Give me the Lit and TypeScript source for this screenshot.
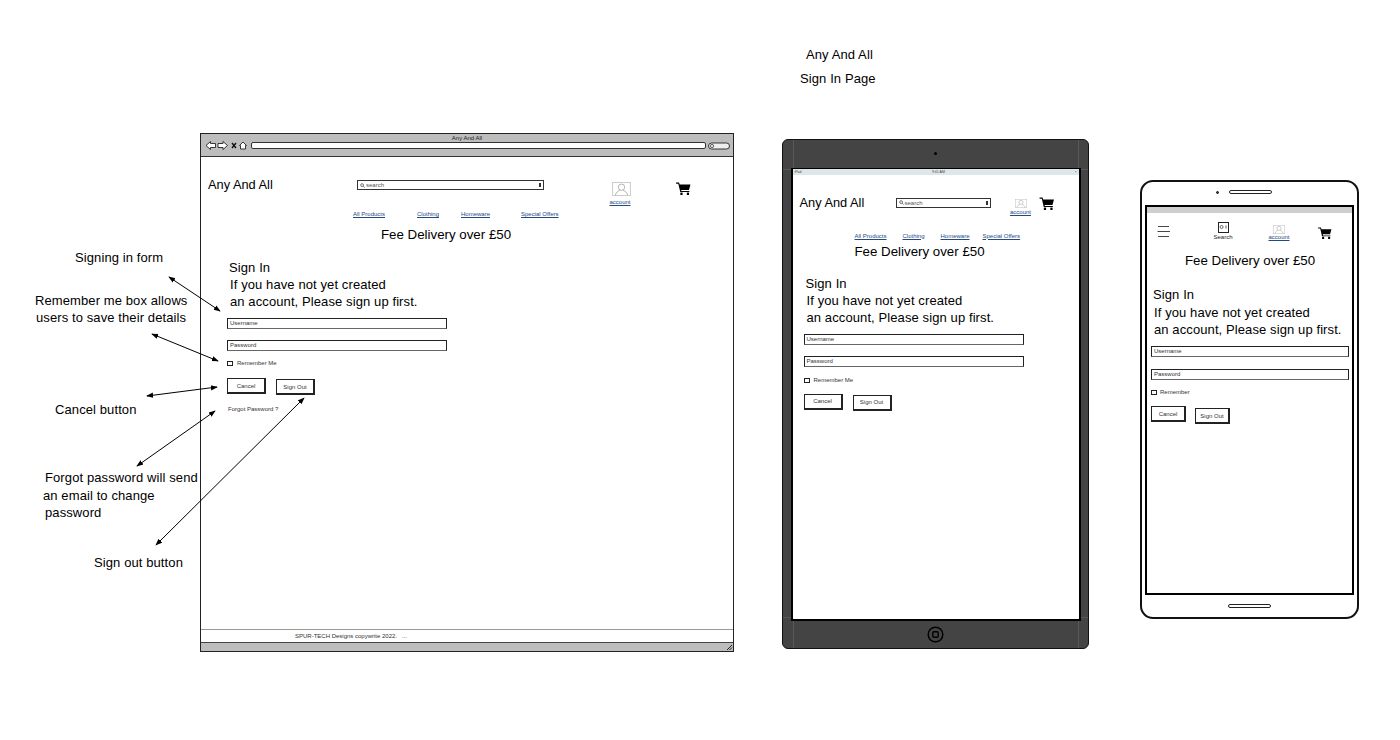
import { LitElement, html, css, svg } from 'lit';
import { customElement } from 'lit/decorators.js';

const notes = [
    { x: 75, y: 250, text: 'Signing in form' },
    { x: 35, y: 293, text: 'Remember me box allows' },
    { x: 36, y: 310, text: 'users to save their details' },
    { x: 55, y: 402, text: 'Cancel button' },
    { x: 45, y: 470, text: 'Forgot password will send' },
    { x: 43, y: 488, text: 'an email to change' },
    { x: 45, y: 505, text: 'password' },
    { x: 94, y: 555, text: 'Sign out button' },
    { x: 806, y: 47, text: 'Any And All' },
    { x: 800, y: 71, text: 'Sign In Page' },
];

const arrows = [
    [169, 277, 220, 311],
    [152, 334, 218, 361],
    [147, 396, 217, 387],
    [137, 466, 215, 411],
    [156, 545, 304, 398],
];

const cartIcon = html`<svg class="cart" viewBox="0 0 16 14">
    <path d="M0 0.6h3.2l0.7 2h11.6l-1.6 6H5.4l0.3 1.2h8.6v1.1H4.5L2.4 1.8H0z" fill="#000"></path>
    <rect x="4.6" y="11.4" width="2.4" height="2.6" fill="#000"></rect>
    <rect x="11.6" y="11.4" width="2.4" height="2.6" fill="#000"></rect>
</svg>`;

const accountIcon = html`<svg class="avatar" viewBox="0 0 20 15">
    <rect x="0.5" y="0.5" width="19" height="14" fill="#fff" stroke="#c8c8c8"></rect>
    <circle cx="10" cy="5.6" r="3.4" fill="none" stroke="#999" stroke-width="0.8"></circle>
    <path d="M3.5 14c0.6-3 3-4.6 4.6-5M16.5 14c-0.6-3-3-4.6-4.6-5" fill="none" stroke="#999" stroke-width="0.8"></path>
</svg>`;

const searchBox = html`<div class="search">
    <svg class="glass" viewBox="0 0 6 6">
        <circle cx="2.5" cy="2.5" r="1.7" fill="none" stroke="#333" stroke-width="0.8"></circle>
        <path d="M3.8 3.8L5.6 5.6" stroke="#333" stroke-width="0.8"></path>
    </svg>
    <span>search</span>
    <b class="spin"></b>
</div>`;

const nav = html`<nav class="links">
    <a>All Products</a><a>Clothing</a><a>Homeware</a><a>Special Offers</a>
</nav>`;

function signInForm(remember: string) {
    return html`<div class="intro">
            <div class="h">Sign In</div>
            <div class="l">If you have not yet created</div>
            <div class="l">an account, Please sign up first.</div>
        </div>
        <div class="field user">Username</div>
        <div class="field pass">Password</div>
        <label class="check"><i></i>${remember}</label>
        <div class="btns">
            <button class="cancel">Cancel</button>
            <button class="out">Sign Out</button>
        </div>`;
}

@customElement('app-root')
export class AppRoot extends LitElement {
    static styles = css`
:host {
    display: block;
    width: 1400px;
    height: 740px;
    background: #fff;
    font-family: "Liberation Sans", Arial, sans-serif;
    color: #000;
}

.canvas {
    position: relative;
    width: 1400px;
    height: 740px;
    overflow: hidden;
}

.note {
    position: absolute;
    font-size: 13px;
    line-height: 15px;
    white-space: nowrap;
    letter-spacing: 0.1px;
}

.arrows {
    position: absolute;
    left: 0;
    top: 0;
    z-index: 3;
    pointer-events: none;
}

/* devices sit on the free canvas */
.browser, .tablet, .phone {
    position: absolute;
    box-sizing: border-box;
}

.browser {
    left: 200px;
    top: 133px;
    width: 534px;
    height: 519px;
    border: 1px solid #222;
    display: flex;
    flex-direction: column;
}

.toolbar {
    height: 23px;
    flex: none;
    background: #bdbdbd;
    border-bottom: 1px solid #333;
    box-sizing: border-box;
}

.title {
    font-size: 6px;
    line-height: 7px;
    text-align: center;
    color: #222;
    height: 7px;
    padding-top: 1px;
}

.tools {
    display: flex;
    align-items: center;
    padding: 0 3px 0 4px;
    margin-top: -2px;
    gap: 2px;
}

.tools svg {
    width: 44px;
    height: 11px;
    flex: none;
}

.tools .go {
    width: 22px;
    height: 8px;
}

.url {
    flex: 1;
    height: 5px;
    background: #fff;
    border: 1px solid #333;
    border-radius: 2px;
}

.view {
    flex: 1;
    display: flex;
    flex-direction: column;
    min-height: 0;
}

.statusline {
    height: 12px;
    flex: none;
    border-top: 1px solid #999;
    border-bottom: 1px solid #444;
    font-size: 6px;
    line-height: 12px;
    padding-left: 94px;
    color: #333;
    white-space: pre;
}

.bottom {
    height: 8px;
    flex: none;
    background: #bdbdbd;
    display: flex;
    justify-content: flex-end;
    align-items: flex-end;
}

.bottom svg {
    width: 7px;
    height: 7px;
}

/* shared page parts */
.head {
    display: flex;
    align-items: flex-start;
}

.logo {
    font-size: 12.8px;
    line-height: 15px;
    white-space: nowrap;
}

.search {
    box-sizing: border-box;
    display: flex;
    align-items: center;
    gap: 1px;
    height: 10px;
    padding: 0 2px;
    border: 1px solid #333;
    font-size: 6px;
    color: #555;
}

.glass {
    width: 5px;
    height: 5px;
}

.spin {
    margin-left: auto;
    width: 2px;
    height: 4px;
    background: #333;
}

.acct {
    display: flex;
    flex-direction: column;
    align-items: center;
    font-size: 6px;
    line-height: 7px;
    color: #24497f;
    text-decoration: underline;
}

.avatar {
    display: block;
}

.cart {
    display: block;
}

.links {
    display: flex;
    font-size: 6px;
    line-height: 7px;
    color: #24497f;
}

.links a {
    text-decoration: underline;
    white-space: nowrap;
}

.fee {
    font-size: 13.3px;
    line-height: 15px;
    white-space: nowrap;
}

.intro {
    font-size: 13px;
    line-height: 17px;
    white-space: nowrap;
    letter-spacing: 0.1px;
    margin-left: 3px;
}

.intro .h {
    margin-left: -1px;
}

.field {
    box-sizing: border-box;
    width: 220px;
    height: 11px;
    border: 1px solid #222;
    border-bottom-color: #666;
    font-size: 6px;
    line-height: 8px;
    padding-left: 2px;
    color: #333;
}

.field.user {
    margin-top: 8px;
}

.field.pass {
    margin-top: 11px;
}

.check {
    display: flex;
    align-items: center;
    font-size: 6px;
    line-height: 7px;
    color: #333;
}

.check i {
    box-sizing: border-box;
    width: 6px;
    height: 5px;
    border: 1px solid #222;
    margin-right: 4px;
}

.btns {
    display: flex;
    align-items: flex-start;
    gap: 10px;
}

button {
    box-sizing: border-box;
    width: 39px;
    height: 16px;
    background: #fff;
    border: 1px solid #222;
    border-right-width: 2px;
    border-bottom-width: 2px;
    padding: 0;
    font-family: inherit;
    font-size: 6px;
    color: #333;
}

.btns .out {
    margin-top: 1px;
}

.forgot {
    font-size: 6px;
    line-height: 7px;
    color: #333;
}

/* desktop */
.browser .head {
    height: 54px;
    padding-left: 7px;
}

.browser .logo {
    margin-top: 20px;
    width: 149px;
}

.browser .search {
    margin-top: 23px;
    width: 187px;
}

.browser .acct {
    margin-top: 25px;
    margin-left: 65px;
    width: 22px;
}

.browser .avatar {
    width: 19px;
    height: 14px;
    margin: 0 0 3px 3px;
}

.browser .cart {
    margin-top: 25px;
    margin-left: 45px;
    width: 15px;
    height: 13px;
}

.browser .links {
    padding-left: 152px;
}

.browser .links a:nth-child(1) { width: 64px; }
.browser .links a:nth-child(2) { width: 44px; }
.browser .links a:nth-child(3) { width: 60px; }

.browser .fee {
    margin: 9px 0 0 180px;
}

.browser .body {
    padding: 17px 0 0 26px;
}

.browser .check {
    margin-top: 9px;
}

.browser .btns {
    margin-top: 11px;
}

.browser .forgot {
    margin: 11px 0 0 1px;
}

.spacer {
    flex: 1;
}

/* tablet */
.tablet {
    left: 782px;
    top: 139px;
    width: 307px;
    height: 510px;
    border: 1.5px solid #111;
    border-radius: 6px;
    background: #444;
    display: flex;
    flex-direction: column;
    align-items: center;
}

.cam {
    width: 3px;
    height: 3px;
    border-radius: 50%;
    background: #000;
    margin: 11.5px 0 13px;
    flex: none;
}

.tablet .screen {
    position: relative;
    box-sizing: border-box;
    width: 290px;
    height: 453px;
    flex: none;
    background: #fff;
    border: 2px solid #000;
    border-top-width: 1px;
}

.ipadbar {
    height: 6px;
    background: #dfe6ea;
    font-size: 3.5px;
    line-height: 6px;
    color: #444;
    display: flex;
    justify-content: space-between;
    padding: 0 2px;
}

.tablet .head {
    height: 45px;
    padding-left: 7px;
}

.tablet .logo {
    margin-top: 20px;
    width: 96px;
}

.tablet .search {
    margin-top: 23px;
    width: 95px;
}

.tablet .acct {
    margin-top: 23px;
    margin-left: 19px;
    width: 22px;
}

.tablet .avatar {
    width: 12px;
    height: 11px;
}

.tablet .cart {
    margin-top: 22px;
    margin-left: 7px;
    width: 16px;
    height: 13px;
}

.tablet .links {
    padding-left: 62px;
    margin-top: 13px;
}

.tablet .links a:nth-child(1) { width: 48px; }
.tablet .links a:nth-child(2) { width: 38px; }
.tablet .links a:nth-child(3) { width: 42px; }

.tablet .fee {
    margin: 4px 0 0 62px;
}

.tablet .body {
    padding: 16px 0 0 11px;
}

.tablet .check {
    margin-top: 10px;
}

.tablet .btns {
    margin-top: 10px;
}

.homebtn {
    width: 17px;
    height: 17px;
    margin-top: 5px;
    flex: none;
}

.seam {
    position: absolute;
    background: #585858;
}

.seam.left, .seam.right {
    top: 0;
    bottom: 0;
    width: 1px;
}

.seam.left { left: 10px; }
.seam.right { right: 9px; }

.seam.top, .seam.base {
    left: 0;
    right: 0;
    height: 1px;
}

.seam.top { top: 29px; }
.seam.base { bottom: 30px; }

/* phone */
.phone {
    left: 1140px;
    top: 180px;
    width: 219px;
    height: 439px;
    border: 2px solid #111;
    border-radius: 13px;
    background: #fff;
    display: flex;
    flex-direction: column;
    align-items: center;
}

.earpiece {
    display: flex;
    align-items: center;
    gap: 10px;
    height: 8px;
    margin: 6px 0 9px;
    padding-right: 12px;
    flex: none;
}

.earpiece i {
    width: 3px;
    height: 3px;
    border: 1px solid #111;
    border-radius: 50%;
    background: #333;
    box-sizing: border-box;
}

.earpiece b, .chin {
    box-sizing: border-box;
    width: 43px;
    height: 4px;
    border: 1px solid #222;
    border-radius: 3px;
    background: #fff;
}

.phone .screen {
    box-sizing: border-box;
    width: 209px;
    height: 390px;
    flex: none;
    border: 2px solid #000;
    background: #fff;
}

.phonebar {
    height: 6px;
    background: #cfcfcf;
}

.chin {
    margin-top: 9px;
    flex: none;
}

.phone .head {
    height: 32px;
    padding-left: 10px;
}

.burger {
    margin-top: 12px;
    width: 14px;
    height: 13px;
}

.scan {
    margin-top: 9px;
    margin-left: 40px;
    width: 24px;
    display: flex;
    flex-direction: column;
    align-items: center;
    font-size: 6px;
    line-height: 7px;
    color: #222;
}

.scan svg {
    width: 11px;
    height: 11px;
    margin-bottom: 1px;
}

.phone .acct {
    margin-top: 12px;
    margin-left: 33px;
    width: 22px;
}

.phone .avatar {
    width: 12px;
    height: 9px;
}

.phone .cart {
    margin-top: 14px;
    margin-left: 27px;
    width: 16px;
    height: 12px;
}

.phone .fee {
    margin: 8px 0 0 38px;
}

.phone .body {
    padding: 18px 0 0 4px;
}

.phone .intro .h {
    margin-bottom: 1px;
}

.phone .field {
    width: 198px;
}

.phone .field.pass {
    margin-top: 12px;
}

.phone .check {
    margin-top: 9px;
}

.phone .check i {
    margin-right: 3px;
}

.phone .btns {
    margin-top: 10px;
    gap: 9px;
}

.phone .btns .out {
    margin-top: 2px;
}

.phone button {
    width: 35px;
}
`;

    render() {
        return html`
<div class="canvas">
    ${notes.map(n => html`<div class="note" style="left:${n.x}px;top:${n.y}px">${n.text}</div>`)}

    <svg class="arrows" width="1400" height="740">
        <defs>
            <marker id="tip" viewBox="0 0 8 8" refX="7" refY="4" markerWidth="7" markerHeight="7" orient="auto-start-reverse">
                <path d="M0 1L8 4L0 7z" fill="#000"></path>
            </marker>
        </defs>
        ${arrows.map(a => svg`<line x1=${a[0]} y1=${a[1]} x2=${a[2]} y2=${a[3]} stroke="#000" stroke-width="1" marker-start="url(#tip)" marker-end="url(#tip)"></line>`)}
    </svg>

    <section class="browser">
        <div class="toolbar">
            <div class="title">Any And All</div>
            <div class="tools">
                <svg viewBox="0 0 44 11">
                    <path d="M1 5.5L5.5 1.5V3.5H10.5V7.5H5.5V9.5z" fill="#fff" stroke="#222" stroke-width="0.9"></path>
                    <path d="M22.5 5.5L18 1.5V3.5H13V7.5H18V9.5z" fill="#fff" stroke="#222" stroke-width="0.9"></path>
                    <path d="M27 3L31 8M31 3L27 8" stroke="#111" stroke-width="1.4"></path>
                    <path d="M34.5 5.5L38 2L41.5 5.5H40.5V9H35.5V5.5z" fill="#fff" stroke="#222" stroke-width="0.9"></path>
                </svg>
                <div class="url"></div>
                <svg class="go" viewBox="0 0 22 8">
                    <rect x="0.5" y="1" width="21" height="6" rx="3" fill="#eee" stroke="#222" stroke-width="0.9"></rect>
                    <circle cx="4" cy="4" r="1.6" fill="none" stroke="#222" stroke-width="0.7"></circle>
                </svg>
            </div>
        </div>
        <div class="view">
            <div class="head">
                <div class="logo">Any And All</div>
                ${searchBox}
                <div class="acct">${accountIcon}account</div>
                ${cartIcon}
            </div>
            ${nav}
            <div class="fee">Fee Delivery over £50</div>
            <div class="body">
                ${signInForm('Remember Me')}
                <div class="forgot">Forgot Password ?</div>
            </div>
            <div class="spacer"></div>
            <div class="statusline">SPUR-TECH Designs copywrite 2022.   ...</div>
        </div>
        <div class="bottom">
            <svg viewBox="0 0 7 7"><path d="M1 6L6 1M3.5 6L6 3.5" stroke="#222" stroke-width="1"></path></svg>
        </div>
    </section>

    <section class="tablet">
        <i class="seam left"></i><i class="seam right"></i><i class="seam top"></i><i class="seam base"></i>
        <div class="cam"></div>
        <div class="screen">
            <div class="ipadbar"><span>iPad</span><span>9:41 AM</span><span>▪</span></div>
            <div class="head">
                <div class="logo">Any And All</div>
                ${searchBox}
                <div class="acct">${accountIcon}account</div>
                ${cartIcon}
            </div>
            ${nav}
            <div class="fee">Fee Delivery over £50</div>
            <div class="body">${signInForm('Remember Me')}</div>
        </div>
        <svg class="homebtn" viewBox="0 0 17 17">
            <circle cx="8.5" cy="8.5" r="7.3" fill="none" stroke="#000" stroke-width="1.5"></circle>
            <rect x="5.8" y="5.8" width="5.4" height="5.4" rx="1" fill="none" stroke="#000" stroke-width="1.4"></rect>
        </svg>
    </section>

    <section class="phone">
        <div class="earpiece"><i></i><b></b></div>
        <div class="screen">
            <div class="phonebar"></div>
            <div class="head">
                <svg class="burger" viewBox="0 0 14 13">
                    <path d="M1 1.5H12M0.5 6.5H13M1 11.5H12" stroke="#333" stroke-width="0.9"></path>
                </svg>
                <div class="scan">
                    <svg viewBox="0 0 11 11">
                        <rect x="0.5" y="0.5" width="10" height="10" fill="none" stroke="#222"></rect>
                        <circle cx="3.6" cy="5" r="1.5" fill="none" stroke="#333" stroke-width="0.7"></circle>
                        <path d="M8 3.5V6.5" stroke="#333" stroke-width="0.8"></path>
                    </svg>
                    Search
                </div>
                <div class="acct">${accountIcon}account</div>
                ${cartIcon}
            </div>
            <div class="fee">Fee Delivery over £50</div>
            <div class="body">${signInForm('Remember')}</div>
        </div>
        <div class="chin"></div>
    </section>
</div>
`;
    }
}
